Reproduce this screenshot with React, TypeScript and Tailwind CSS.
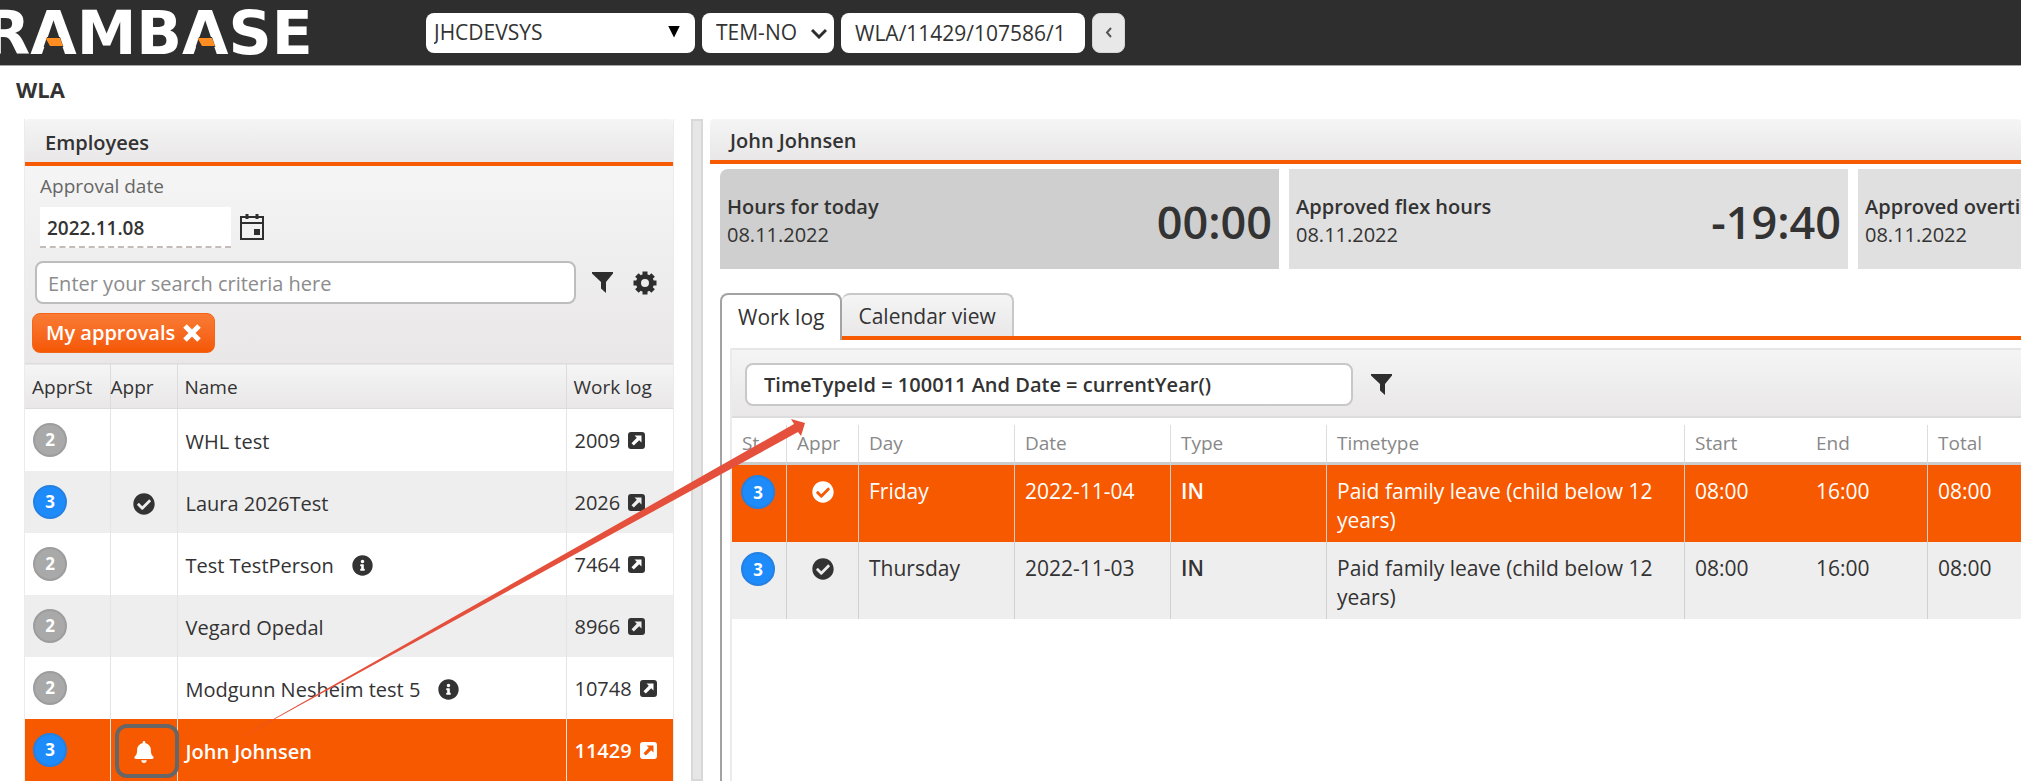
import clsx from "clsx";
import { FaBell, FaCheckCircle, FaInfoCircle } from "react-icons/fa";

interface Employee {
  id: number;
  name: string;
  status: 2 | 3;
  approval?: "approved" | "pending";
  info?: boolean;
}

interface WorkLogRow {
  day: string;
  date: string;
  type: string;
  timetype: string;
  start: string;
  end: string;
  total: string;
}

const employees: Employee[] = [
  { id: 2009, name: "WHL test", status: 2 },
  { id: 2026, name: "Laura 2026Test", status: 3, approval: "approved" },
  { id: 7464, name: "Test TestPerson", status: 2, info: true },
  { id: 8966, name: "Vegard Opedal", status: 2 },
  { id: 10748, name: "Modgunn Nesheim test 5", status: 2, info: true },
  { id: 11429, name: "John Johnsen", status: 3, approval: "pending" },
];

const selectedEmployee = 11429;

const workLog: WorkLogRow[] = [
  {
    day: "Friday",
    date: "2022-11-04",
    type: "IN",
    timetype: "Paid family leave (child below 12 years)",
    start: "08:00",
    end: "16:00",
    total: "08:00",
  },
  {
    day: "Thursday",
    date: "2022-11-03",
    type: "IN",
    timetype: "Paid family leave (child below 12 years)",
    start: "08:00",
    end: "16:00",
    total: "08:00",
  },
];

const summaries = [
  { title: "Hours for today", date: "08.11.2022", value: "00:00" },
  { title: "Approved flex hours", date: "08.11.2022", value: "-19:40" },
  { title: "Approved overtime", date: "08.11.2022", value: "" },
];

function Logo() {
  return (
    <svg
      width="418"
      height="65"
      viewBox="0 0 418 65"
      className="shrink-0"
      role="img"
      aria-label="RamBase"
    >
      <text
        x="-16"
        y="54"
        fill="#ffffff"
        fontFamily="'DejaVu Sans', sans-serif"
        fontWeight="bold"
        fontSize="60"
      >
        RAMBASE
      </text>
      {/* The A's have an orange slab instead of a crossbar */}
      {[0, 152].map((x) => (
        <g key={x} transform={`translate(${x} 0)`}>
          <path d="M47 37h13l3.400 10H43.600z" fill="#2e2e2e" />
          <path d="M45.500 38h14.500l3 8H50z" fill="#ff8d22" />
        </g>
      ))}
    </svg>
  );
}

function CalendarIcon() {
  return (
    <svg width="24" height="27" viewBox="0 0 24 27" fill="none" stroke="#2e2e2e" strokeWidth="2">
      <path d="M1 3h22v22H1zM1 9h22" />
      <path d="M7 0v5M17 0v5" strokeWidth="3" />
      <path d="M14 15h6v6h-6z" fill="#2e2e2e" stroke="none" />
    </svg>
  );
}

function FilterIcon() {
  return (
    <svg width="21" height="21" viewBox="0 0 21 21" fill="#2e2e2e">
      <path d="M0 0h21v1.500l-7 8.500v11l-5-4.500V10L0 1.500z" />
    </svg>
  );
}

function GearIcon() {
  return (
    <svg width="24" height="24" viewBox="0 0 24 24" fill="none" stroke="#2e2e2e">
      <circle cx="12" cy="12" r="6.500" strokeWidth="5" />
      <path
        d="M12 .5v4M12 19.500v4M.5 12h4M19.500 12h4M3.900 3.900l2.800 2.800M17.300 17.300l2.800 2.800M3.900 20.100l2.800-2.800M17.300 6.700l2.800-2.800"
        strokeWidth="5"
      />
    </svg>
  );
}

function OpenIcon() {
  return (
    <svg width="17" height="17" viewBox="0 0 17 17" fill="currentColor">
      <path
        fillRule="evenodd"
        d="M3 0h11a3 3 0 0 1 3 3v11a3 3 0 0 1-3 3H3a3 3 0 0 1-3-3V3a3 3 0 0 1 3-3zM6.500 3.500l2.300 2.300L3.500 11.200l2.300 2.300 5.400-5.300 2.300 2.300v-7z"
      />
    </svg>
  );
}

function StatusBadge({ status }: { status: 2 | 3 }) {
  return (
    <span
      className={clsx(
        "flex size-[34px] items-center justify-center rounded-full border-2 text-[17px] leading-none font-bold text-white",
        status === 3 ? "border-[#2480e2] bg-[#1e8bfb]" : "border-[#9d9d9d] bg-[#a9a9a9]"
      )}
    >
      {status}
    </span>
  );
}

function PanelHeader({ title, className }: { title: string; className: string }) {
  return (
    <h2
      className={clsx(
        "rounded-t border-b-4 border-[#f65a03] bg-linear-to-b from-[#f5f5f5] to-[#e9e7e8] pb-[6px] text-[20px] leading-[27px] font-semibold",
        className
      )}
    >
      {title}
    </h2>
  );
}

function TopBar() {
  return (
    <header className="flex h-[66px] shrink-0 items-center border-b border-[#a5a5a5] bg-[#2e2e2e]">
      <Logo />
      <div className="flex items-center gap-[7px] pl-2 text-[21px]">
        <div className="relative">
          <select
            aria-label="System"
            className="h-10 w-[269px] appearance-none rounded-lg bg-white pr-10 pl-2"
          >
            <option>JHCDEVSYS</option>
          </select>
          <span className="pointer-events-none absolute top-[13px] right-[15px] h-3 w-3 bg-black [clip-path:polygon(0_0,100%_0,50%_100%)]" />
        </div>
        <div className="relative">
          <select
            aria-label="Location"
            className="h-10 w-[132px] appearance-none rounded-lg bg-white pl-[14px]"
          >
            <option>TEM-NO</option>
          </select>
          <svg
            width="16"
            height="11"
            viewBox="0 0 16 11"
            fill="none"
            stroke="#2e2e2e"
            strokeWidth="3"
            className="pointer-events-none absolute top-[15px] right-[7px]"
          >
            <path d="M1 2l7 7 7-7" />
          </svg>
        </div>
        <input
          aria-label="Target"
          defaultValue="WLA/11429/107586/1"
          className="h-10 w-[244px] rounded-lg bg-white px-[14px]"
        />
        <button
          aria-label="Back"
          className="flex h-10 w-[33px] items-center justify-center rounded-lg border border-[#d6d6d6] bg-[#e8e8e8]"
        >
          <svg width="7" height="11" viewBox="0 0 7 11" fill="none" stroke="#555" strokeWidth="2">
            <path d="M6 1L2 5.500l4 4.500" />
          </svg>
        </button>
      </div>
    </header>
  );
}

function EmployeeFilters() {
  return (
    <div className="bg-linear-to-b from-[#f5f5f5] to-[#e9e7e8] px-[7px] pt-[7px] pb-[10px]">
      <label htmlFor="approval-date" className="block px-2 text-[19px] leading-[27px] text-[#666]">
        Approval date
      </label>
      <div className="mt-[7px] flex items-center gap-[9px] px-2">
        <input
          id="approval-date"
          defaultValue="2022.11.08"
          className="h-[41px] w-[191px] border-b-2 border-dashed border-[#c4bcb8] bg-white px-[7px] pt-[2px] text-[19px] font-semibold"
        />
        <button aria-label="Pick a date">
          <CalendarIcon />
        </button>
      </div>
      <div className="mt-[13px] flex items-center px-[3px]">
        <input
          aria-label="Search employees"
          placeholder="Enter your search criteria here"
          className="h-[43px] min-w-0 flex-1 rounded-lg border-2 border-[#bdbdbd] bg-white px-[11px] pt-[2px] text-[20px] placeholder:text-[#8c8c8c]"
        />
        <button aria-label="Filter" className="ml-4">
          <FilterIcon />
        </button>
        <button aria-label="Settings" className="mr-[6px] ml-5">
          <GearIcon />
        </button>
      </div>
      <button className="mt-[9px] flex h-10 items-center gap-2 rounded-lg border border-[#f4651a] bg-linear-to-b from-[#f97b33] to-[#f55700] px-[13px] text-[20px] font-semibold text-white">
        My approvals
        <svg width="18" height="18" viewBox="0 0 18 18" stroke="currentColor" strokeWidth="5">
          <path d="M2 2l14 14M16 2L2 16" />
        </svg>
      </button>
    </div>
  );
}

function EmployeeTable() {
  return (
    <table className="w-full table-fixed border-collapse text-left text-[20px]">
      <thead>
        <tr className="h-[45px] border-y border-[#dcdcdc] bg-linear-to-b from-[#f5f5f5] to-[#e9e7e8] text-[19px]">
          <th className="w-[85px] border-r border-[#dcdcdc] pt-[2px] pl-[7px] font-normal">ApprSt</th>
          <th className="w-[67px] border-r border-[#dcdcdc] pt-[2px] font-normal">Appr</th>
          <th className="border-r border-[#dcdcdc] pt-[2px] pl-[7px] font-normal">Name</th>
          <th className="w-[107px] pt-[2px] pl-[7px] font-normal">Work log</th>
        </tr>
      </thead>
      <tbody>
        {employees.map((employee, i) => {
          const selected = employee.id === selectedEmployee;
          return (
            <tr
              key={employee.id}
              className={clsx(
                "h-[62px]",
                selected ? "bg-[#f65900] font-semibold text-white" : i % 2 ? "bg-[#eee]" : "bg-white"
              )}
            >
              <td className="border-r border-[#e4e4e4] pl-2">
                <StatusBadge status={employee.status} />
              </td>
              <td className="relative border-r border-[#e4e4e4] pt-1">
                {employee.approval === "approved" && (
                  <FaCheckCircle size={22} className="mx-auto" />
                )}
                {employee.approval === "pending" && (
                  <>
                    <FaBell size={22} className="mx-auto" />
                    <span className="absolute top-[5px] -right-[2px] h-[54px] w-16 rounded-xl border-4 border-[#666]" />
                  </>
                )}
              </td>
              <td className="border-r border-[#e4e4e4] pt-1 pl-2">
                <span className="flex items-center gap-[18px]">
                  {employee.name}
                  {employee.info && <FaInfoCircle size={21} />}
                </span>
              </td>
              <td className="pt-[2px] pl-2">
                <a href={`#${employee.id}`} className="flex items-center gap-2">
                  {employee.id}
                  <OpenIcon />
                </a>
              </td>
            </tr>
          );
        })}
      </tbody>
    </table>
  );
}

function SummaryCards() {
  return (
    <div className="flex gap-[10px] pt-[5px] pl-[10px]">
      {summaries.map((card, i) => (
        <div
          key={card.title}
          className={clsx(
            "flex h-[100px] w-[559px] shrink-0 items-center justify-between px-[7px] whitespace-nowrap",
            i === 0 ? "rounded-tl-lg bg-[#cfcfcf]" : "bg-[#e0e0e0]"
          )}
        >
          <div className="pt-1 text-[20px] leading-7">
            <div className="font-semibold">{card.title}</div>
            <div>{card.date}</div>
          </div>
          <div className="pt-1 text-[45px] leading-none font-semibold">{card.value}</div>
        </div>
      ))}
    </div>
  );
}

function WorkLogTable() {
  const head = "border-[#ddd] pl-[10px] font-normal";
  const cell = "border-[#d0d0d0] pt-3 pb-[7px] pl-[10px]";
  return (
    <table className="mt-[7px] w-full table-fixed border-separate border-spacing-0 text-left text-[21px] leading-[29px]">
      <thead>
        <tr className="h-10 text-[19px] text-[#888] [&>th]:border-b-[3px] [&>th]:border-b-[#ccc]">
          <th className={clsx(head, "w-[55px] border-r")}>St</th>
          <th className={clsx(head, "w-[72px] border-r")}>Appr</th>
          <th className={clsx(head, "w-[156px] border-r")}>Day</th>
          <th className={clsx(head, "w-[156px] border-r")}>Date</th>
          <th className={clsx(head, "w-[156px] border-r")}>Type</th>
          <th className={clsx(head, "w-[358px] border-r")}>Timetype</th>
          <th className={clsx(head, "w-[121px]")}>Start</th>
          <th className={clsx(head, "w-[122px] border-r")}>End</th>
          <th className={head}>Total</th>
        </tr>
      </thead>
      <tbody>
        {workLog.map((row, i) => (
          <tr
            key={row.date}
            className={clsx("align-top", i === 0 ? "bg-[#f65900] text-white" : "bg-[#eee]")}
          >
            <td className="border-r border-[#d0d0d0] pt-[10px] pl-[9px]">
              <StatusBadge status={3} />
            </td>
            <td className="border-r border-[#d0d0d0] pt-4">
              <FaCheckCircle size={22} className="mx-auto" />
            </td>
            <td className={clsx(cell, "border-r")}>{row.day}</td>
            <td className={clsx(cell, "border-r")}>{row.date}</td>
            <td className={clsx(cell, "border-r font-semibold")}>{row.type}</td>
            <td className={clsx(cell, "border-r pr-5")}>{row.timetype}</td>
            <td className={cell}>{row.start}</td>
            <td className={clsx(cell, "border-r")}>{row.end}</td>
            <td className={cell}>{row.total}</td>
          </tr>
        ))}
      </tbody>
    </table>
  );
}

function WorkLogPanel() {
  return (
    <div className="mt-6 ml-[10px] flex flex-1 flex-col">
      <div className="flex text-[21px]" role="tablist">
        <button
          role="tab"
          aria-selected="true"
          className="h-[47px] rounded-t-lg border-t-2 border-r-2 border-l-2 border-[#a3a3a3] px-4"
        >
          Work log
        </button>
        <div className="flex flex-1 border-b-4 border-[#f65a03]">
          <button
            role="tab"
            aria-selected="false"
            className="h-[43px] rounded-t-lg border-t-2 border-r-2 border-[#c8c8c8] bg-linear-to-b from-[#f5f5f5] to-[#e9e7e8] px-4 pt-[3px]"
          >
            Calendar view
          </button>
        </div>
      </div>
      <div className="flex-1 border-l-2 border-[#a3a3a3] pt-2 pl-2">
        <div className="h-full border-l-2 border-[#ebebeb]">
          <div className="flex items-center gap-[18px] border-t-2 border-b-2 border-t-[#e6e6e6] border-b-[#dcdcdc] bg-linear-to-b from-[#f5f5f5] to-[#e9e7e8] px-[13px] pt-[13px] pb-[10px]">
            <input
              aria-label="Work log filter"
              defaultValue="TimeTypeId = 100011 And Date = currentYear()"
              className="h-[43px] w-[608px] rounded-lg border-2 border-[#c8c8c8] bg-white px-[17px] text-[20px] font-semibold"
            />
            <button aria-label="Filter">
              <FilterIcon />
            </button>
          </div>
          <WorkLogTable />
        </div>
      </div>
    </div>
  );
}

// Points from the selected employee to the work log filter
function Arrow() {
  return (
    <svg
      width="820"
      height="781"
      viewBox="0 0 820 781"
      className="pointer-events-none absolute top-0 left-0"
      aria-hidden="true"
    >
      <path d="M233 742L794 424 791 419 805 423 801 436 798 432z" fill="#e5503c" />
    </svg>
  );
}

export default function App() {
  return (
    <div className="relative flex h-screen flex-col overflow-hidden bg-white font-['Open_Sans','Noto_Sans',sans-serif] text-[#333]">
      <TopBar />
      <h1 className="px-4 pt-2 pb-[15px] text-[22px] leading-[30px] font-bold">WLA</h1>
      <main className="flex min-h-0 flex-1">
        <section className="ml-6 w-[650px] shrink-0 border-x border-[#ebebeb]">
          <PanelHeader title="Employees" className="px-5 pt-[10px]" />
          <EmployeeFilters />
          <EmployeeTable />
        </section>
        <div className="mr-[7px] ml-[17px] w-3 shrink-0 border-2 border-[#d8d8d8] bg-[#e6e6e6]" />
        <section className="flex min-w-0 flex-1 flex-col overflow-hidden">
          <PanelHeader title="John Johnsen" className="px-5 pt-2" />
          <SummaryCards />
          <WorkLogPanel />
        </section>
      </main>
      <Arrow />
    </div>
  );
}
